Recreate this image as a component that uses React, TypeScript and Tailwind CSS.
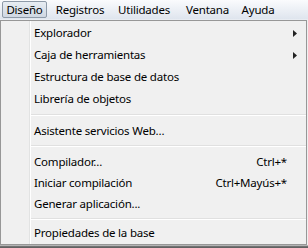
import React from "react";

type Row =
  | { kind: "item"; label: string; shortcut?: string; submenu?: boolean; h: string }
  | { kind: "sep"; h: string };

const rows: Row[] = [
  { kind: "item", label: "Explorador", submenu: true, h: "h-[22px]" },
  { kind: "item", label: "Caja de herramientas", submenu: true, h: "h-[22px]" },
  { kind: "item", label: "Estructura de base de datos", h: "h-[22px]" },
  { kind: "item", label: "Librería de objetos", h: "h-[22px]" },
  { kind: "sep", h: "h-[10px]" },
  { kind: "item", label: "Asistente servicios Web...", h: "h-[21px]" },
  { kind: "sep", h: "h-[10px]" },
  { kind: "item", label: "Compilador...", shortcut: "Ctrl+*", h: "h-[21px]" },
  { kind: "item", label: "Iniciar compilación", shortcut: "Ctrl+Mayús+*", h: "h-[21px]" },
  { kind: "item", label: "Generar aplicación...", h: "h-[21px]" },
  { kind: "sep", h: "h-[9px]" },
  { kind: "item", label: "Propiedades de la base", h: "h-[20px]" },
];

const menus = [
  { label: "Registros", w: "w-[66px]" },
  { label: "Utilidades", w: "w-[62px]" },
  { label: "Ventana", w: "w-[65px]" },
  { label: "Ayuda", w: "w-[36px]" },
];

function SubArrow() {
  return (
    <svg width="4" height="7" viewBox="0 0 4 7" className="mr-[9px]">
      <path d="M0 0 L4 3.5 L0 7 Z" fill="#222" />
    </svg>
  );
}

export default function App() {
  return (
    <div
      className="w-[308px] h-[248px] bg-[#f0f0f0] flex flex-col overflow-hidden text-[11.5px] tracking-[-0.2px] text-black"
      style={{ fontFamily: '"Noto Sans", "Open Sans", sans-serif' }}
    >
      {/* menu bar */}
      <div className="h-[20px] flex items-stretch bg-gradient-to-b from-[#fafbfd] to-[#dfe5ee] border-b border-[#e8ecf2]">
        <div className="ml-[2px] my-[1px] w-[45px] flex items-center justify-center rounded-[2px] border border-[#8e9aa8] bg-gradient-to-b from-[#e8edf3] to-[#cfd7e2] leading-none">
          Diseño
        </div>
        {menus.map((m) => (
          <div key={m.label} className={`${m.w} flex items-center justify-center leading-none`}>
            {m.label}
          </div>
        ))}
      </div>

      {/* dropdown */}
      <div className="w-[307px] h-[225px] border border-[#979797] bg-[#f0f0f0] flex">
        <div className="w-[28px] shrink-0" />
        <div className="w-px bg-[#e2e3e3] shrink-0" />
        <div className="w-px bg-white shrink-0" />
        <div className="flex-1 flex flex-col pt-[1px]">
          {rows.map((r, i) =>
            r.kind === "sep" ? (
              <div key={i} className={`${r.h} flex flex-col justify-center`}>
                <div className="h-px bg-[#e0e0e0]" />
                <div className="h-px bg-white" />
              </div>
            ) : (
              <div key={i} className={`${r.h} flex items-center pl-[3px]`}>
                <span className="flex-1 whitespace-nowrap">{r.label}</span>
                {r.shortcut && <span className="mr-[19px] whitespace-nowrap">{r.shortcut}</span>}
                {r.submenu && <SubArrow />}
              </div>
            )
          )}
        </div>
      </div>

      {/* window edge below */}
      <div className="h-px bg-[#b4b4b4]" />
      <div className="flex-1 bg-gradient-to-b from-[#7a7a7a] to-[#5a5a5a]" />
    </div>
  );
}
